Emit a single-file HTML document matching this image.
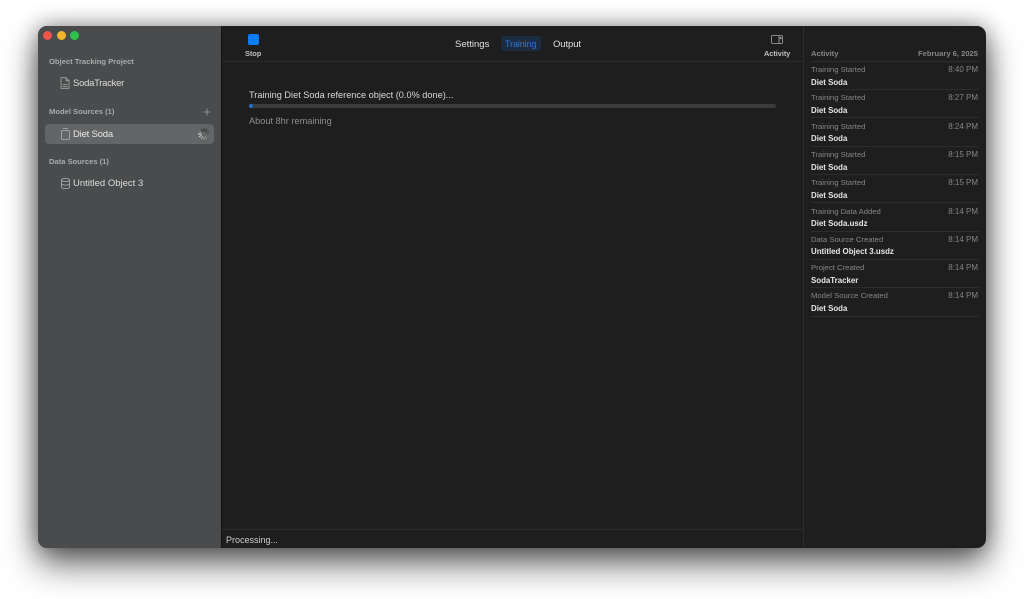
<!DOCTYPE html>
<html>
<head>
<meta charset="utf-8">
<style>
html,body{margin:0;padding:0;width:1024px;height:599px;overflow:hidden;background:#fff;font-family:"Liberation Sans",sans-serif}
.t{position:absolute;white-space:nowrap;line-height:12px}
.shadow{position:absolute;left:38px;top:26px;width:948px;height:522px;border-radius:9px;box-shadow:0 16px 34px rgba(0,0,0,.6),0 0 22px rgba(0,0,0,.38)}
.win{position:absolute;left:38px;top:26px;width:948px;height:522px;border-radius:9px;background:#1e1e1e;overflow:hidden;filter:blur(.35px)}
.side{position:absolute;left:0;top:0;width:183px;height:522px;background:#494b4c;border-right:1px solid #111}
.dot{position:absolute;top:4.500px;width:9px;height:9px;border-radius:50%}
.head{font-size:7.6px;color:#a8aaab;font-weight:bold}
.item{font-size:9.5px;color:#dcdcdc}
.sel{position:absolute;left:7px;top:98px;width:169px;height:20px;border-radius:4px;background:#636566}
.line{position:absolute;background:#2c2c2c;height:1px}
.a1{font-size:7.7px;color:#858585}
.a2{font-size:7.9px;color:#e6e6e6;font-weight:bold}
.a3{font-size:8px;color:#858585;text-align:right;width:100px}
svg{position:absolute;overflow:visible}
</style>
</head>
<body>
<div class="shadow"></div>
<div class="win">
  <div class="side">
    <div class="dot" style="left:4.500px;background:#f0544c"></div>
    <div class="dot" style="left:18.500px;background:#f2b52f"></div>
    <div class="dot" style="left:31.500px;background:#2ec24a"></div>
    <div class="t head" style="left:11px;top:30px">Object Tracking Project</div>
    <svg style="left:22px;top:51px" width="10" height="12" viewBox="0 0 10 12" fill="none" stroke="#a5a7a8" stroke-width=".8"><path d="M1 .7H6L9 3.700V11.300H1Z"/><path d="M6 .7V3.700H9"/><path d="M2.500 7.500H7.500M2.500 9.500H7.500"/></svg>
    <div class="t item" style="left:35px;top:52px;letter-spacing:-.27px">SodaTracker</div>
    <div class="t head" style="left:11px;top:80px">Model Sources (1)</div>
    <svg style="left:165px;top:82px" width="8" height="8" viewBox="0 0 8 8" stroke="#a0a2a3" stroke-width=".8"><path d="M4 .5V7.500M.5 4H7.500"/></svg>
    <div class="sel"></div>
    <svg style="left:23px;top:102px" width="9" height="12" viewBox="0 0 9 12" fill="none" stroke="#aeb0b1" stroke-width=".8"><rect x=".5" y="2.500" width="8" height="9" rx="1.300"/><path d="M2 .6H7"/></svg>
    <div class="t item" style="left:35px;top:103px;color:#e8e8e8;letter-spacing:-.2px">Diet Soda</div>
    <svg style="left:160px;top:102px" width="12" height="12" viewBox="-6 -6 12 12" stroke-width=".9" stroke-linecap="round">
      <g stroke="#1d1d1d"><path d="M0 -5.500V-3"/></g>
      <g stroke="#2d2d2d" transform="rotate(30)"><path d="M0 -5.500V-3"/></g>
      <g stroke="#3d3d3d" transform="rotate(60)"><path d="M0 -5.500V-3"/></g>
      <g stroke="#555" transform="rotate(90)"><path d="M0 -5.500V-3"/></g>
      <g stroke="#6f6f6f" transform="rotate(120)"><path d="M0 -5.500V-3"/></g>
      <g stroke="#8a8a8a" transform="rotate(150)"><path d="M0 -5.500V-3"/></g>
      <g stroke="#a5a5a5" transform="rotate(180)"><path d="M0 -5.500V-3"/></g>
      <g stroke="#c0c0c0" transform="rotate(210)"><path d="M0 -5.500V-3"/></g>
      <g stroke="#dadada" transform="rotate(240)"><path d="M0 -5.500V-3"/></g>
      <g stroke="#eee" transform="rotate(270)"><path d="M0 -5.500V-3"/></g>
      <g stroke="#888" transform="rotate(300)"><path d="M0 -5.500V-3"/></g>
      <g stroke="#333" transform="rotate(330)"><path d="M0 -5.500V-3"/></g>
    </svg>
    <div class="t head" style="left:11px;top:130px">Data Sources (1)</div>
    <svg style="left:23px;top:152px" width="9" height="11" viewBox="0 0 9 11" fill="none" stroke="#aeb0b1" stroke-width=".8"><ellipse cx="4.500" cy="2" rx="4" ry="1.600"/><path d="M.5 2V9C.5 10 2.200 10.600 4.500 10.600S8.500 10 8.500 9V2M.5 5.500C.5 6.500 2.200 7.100 4.500 7.100S8.500 6.500 8.500 5.500"/></svg>
    <div class="t item" style="left:35px;top:152px">Untitled Object 3</div>
  </div>

  <div style="position:absolute;left:210px;top:8px;width:11px;height:11px;border-radius:2px;background:#0a7cf5"></div>
  <div class="t" style="left:207px;top:22px;font-size:7.500px;color:#bcbcbc;font-weight:bold;letter-spacing:-.1px">Stop</div>
  <div class="t" style="left:417px;top:13px;font-size:9.500px;color:#e0e0e0">Settings</div>
  <div style="position:absolute;left:463px;top:10px;width:40px;height:15px;border-radius:3px;background:#1b2d42"></div>
  <div class="t" style="left:467px;top:12px;font-size:9px;color:#2a78d8;letter-spacing:-.1px">Training</div>
  <div class="t" style="left:515px;top:13px;font-size:9.500px;color:#e0e0e0;letter-spacing:-.1px">Output</div>
  <svg style="left:733px;top:9px" width="12" height="10" viewBox="0 0 12 10" fill="none" stroke="#a8a8a8" stroke-width=".8"><rect x=".5" y=".5" width="11" height="8" rx="1"/><path d="M8 .5V8.500"/><rect x="8.800" y="2" width="1.600" height="2" fill="#a8a8a8" stroke="none"/></svg>
  <div class="t" style="left:726px;top:22px;font-size:7.300px;color:#c0c0c0;font-weight:bold">Activity</div>
  <div class="line" style="left:184px;top:35px;width:581px;background:#2a2a2a"></div>
  <div class="line" style="left:765px;top:0;width:1px;height:522px"></div>

  <div class="t" style="left:211px;top:63px;font-size:9.200px;color:#d8d8d8">Training Diet Soda reference object (0.0% done)...</div>
  <div style="position:absolute;left:211px;top:78px;width:527px;height:4px;border-radius:2px;background:#3a3b3c"></div>
  <div style="position:absolute;left:211px;top:78px;width:4px;height:4px;border-radius:2px;background:#1f6fd0"></div>
  <div class="t" style="left:211px;top:89px;font-size:9.200px;color:#8e8e8e">About 8hr remaining</div>

  <div class="line" style="left:184px;top:503px;width:581px"></div>
  <div class="t" style="left:188px;top:508px;font-size:9px;color:#cfcfcf">Processing...</div>

  <div style="position:absolute;left:-38px;top:-26px;width:1024px;height:599px;">
    <div class="t a1" style="left:811px;top:48px;font-weight:bold;font-size:7.600px">Activity</div>
    <div class="t a3" style="left:878px;top:48px;font-weight:bold;font-size:7.600px">February 6, 2025</div>
    <div class="line" style="left:811px;top:61px;width:168px"></div>

    <div class="t a1" style="left:811px;top:64px">Training Started</div><div class="t a3" style="left:878px;top:64px">8:40 PM</div><div class="t a2" style="left:811px;top:77px">Diet Soda</div><div class="line" style="left:811px;top:89px;width:168px"></div>
    <div class="t a1" style="left:811px;top:92px">Training Started</div><div class="t a3" style="left:878px;top:92px">8:27 PM</div><div class="t a2" style="left:811px;top:105px">Diet Soda</div><div class="line" style="left:811px;top:117px;width:168px"></div>
    <div class="t a1" style="left:811px;top:121px">Training Started</div><div class="t a3" style="left:878px;top:121px">8:24 PM</div><div class="t a2" style="left:811px;top:133px">Diet Soda</div><div class="line" style="left:811px;top:146px;width:168px"></div>
    <div class="t a1" style="left:811px;top:149px">Training Started</div><div class="t a3" style="left:878px;top:149px">8:15 PM</div><div class="t a2" style="left:811px;top:162px">Diet Soda</div><div class="line" style="left:811px;top:174px;width:168px"></div>
    <div class="t a1" style="left:811px;top:177px">Training Started</div><div class="t a3" style="left:878px;top:177px">8:15 PM</div><div class="t a2" style="left:811px;top:190px">Diet Soda</div><div class="line" style="left:811px;top:202px;width:168px"></div>
    <div class="t a1" style="left:811px;top:206px">Training Data Added</div><div class="t a3" style="left:878px;top:206px">8:14 PM</div><div class="t a2" style="left:811px;top:218px">Diet Soda.usdz</div><div class="line" style="left:811px;top:231px;width:168px"></div>
    <div class="t a1" style="left:811px;top:234px">Data Source Created</div><div class="t a3" style="left:878px;top:234px">8:14 PM</div><div class="t a2" style="left:811px;top:246px">Untitled Object 3.usdz</div><div class="line" style="left:811px;top:259px;width:168px"></div>
    <div class="t a1" style="left:811px;top:262px">Project Created</div><div class="t a3" style="left:878px;top:262px">8:14 PM</div><div class="t a2" style="left:811px;top:275px">SodaTracker</div><div class="line" style="left:811px;top:287px;width:168px"></div>
    <div class="t a1" style="left:811px;top:290px">Model Source Created</div><div class="t a3" style="left:878px;top:290px">8:14 PM</div><div class="t a2" style="left:811px;top:303px">Diet Soda</div><div class="line" style="left:811px;top:316px;width:168px"></div>
  </div>
</div>
</body>
</html>
